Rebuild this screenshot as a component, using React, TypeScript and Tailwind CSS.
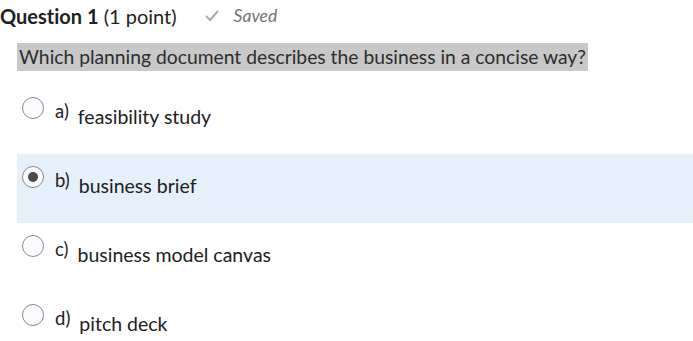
const OPTIONS = [
  { key: "a", label: "feasibility study", selected: false },
  { key: "b", label: "business brief", selected: true },
  { key: "c", label: "business model canvas", selected: false },
  { key: "d", label: "pitch deck", selected: false },
];

function Radio({ checked }: { checked: boolean }) {
  return (
    <span className="flex h-[22px] w-[22px] shrink-0 items-center justify-center rounded-full border border-[#868a8c] bg-[#f9fbff] shadow-[inset_0_0_0_1px_#fff]">
      {checked && <span className="h-[10px] w-[10px] rounded-full bg-[#494c4e]" />}
    </span>
  );
}

export default function App() {
  return (
    <div className="h-[341px] w-[693px] overflow-hidden bg-white font-['Lato',sans-serif] text-[#202122] [font-variant-ligatures:none]">
      <div className="flex h-[32px] items-center">
        <h2 className="text-[20px] leading-none">
          <span className="font-bold">Question 1</span> (1 point)
        </h2>
        <span className="ml-[28px] flex items-center gap-[15px] text-[#6e7376]">
          <svg width="14" height="12" viewBox="0 0 14 12" fill="none">
            <path d="M1.5 6.5 L5 10 L12.5 1.5" stroke="#a6abae" strokeWidth="2" strokeLinecap="round" strokeLinejoin="round" />
          </svg>
          <span className="text-[17.5px] italic">Saved</span>
        </span>
      </div>

      <div className="mt-[11px] ml-[17px] inline-block bg-[#c8c8c8] px-[2px] text-[19.3px] leading-[28px] text-[#2b2d2f]">
        Which planning document describes the business in a concise way?
      </div>

      <div className="mt-[14px] ml-[17px]">
        {OPTIONS.map((o) => (
          <div
            key={o.key}
            className={`flex h-[69px] items-start pt-[12px] pl-[5px] ${o.selected ? "bg-[#e6f0fb]" : ""}`}
          >
            <Radio checked={o.selected} />
            <span className="ml-[11px] mt-[4px] text-[18.5px] leading-[20px]">{o.key})</span>
            <span className="ml-[9px] mt-[10px] text-[19.5px] leading-[20px]">{o.label}</span>
          </div>
        ))}
      </div>
    </div>
  );
}
